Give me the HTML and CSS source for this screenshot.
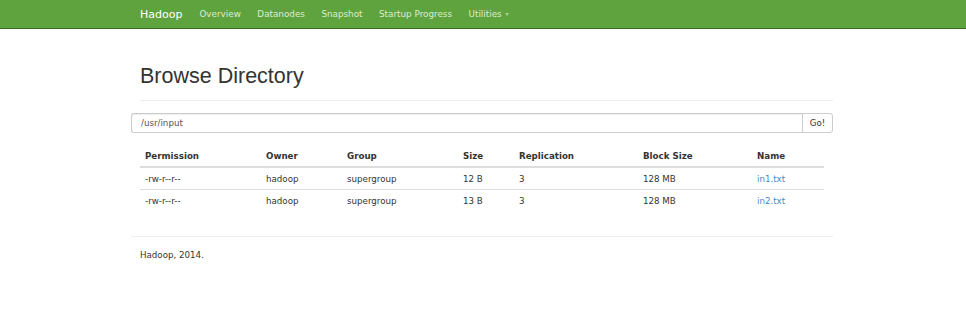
FILE: index.html
```html
<!DOCTYPE html>
<html lang="en">
<head>
    <meta charset="UTF-8">
    <title>Browsing HDFS</title>
    <link rel="stylesheet" href="styles.css">
</head>
<body>

    <!-- Top navigation -->
    <header class="navbar">
        <div class="nav-inner">
            <a class="brand" href="#">Hadoop</a>
            <ul class="nav">
                <li><a href="#">Overview</a></li>
                <li><a href="#">Datanodes</a></li>
                <li><a href="#">Snapshot</a></li>
                <li><a href="#">Startup Progress</a></li>
                <li><a href="#">Utilities <span class="caret"></span></a></li>
            </ul>
        </div>
    </header>

    <div class="container">
        <div class="page-header">
            <h1>Browse Directory</h1>
        </div>

        <form class="input-group" onsubmit="return false;">
            <input type="text" class="path-input" value="/usr/input">
            <button type="submit" class="go-btn">Go!</button>
        </form>

        <table class="listing">
            <thead>
                <tr>
                    <th class="c-perm">Permission</th>
                    <th class="c-owner">Owner</th>
                    <th class="c-group">Group</th>
                    <th class="c-size">Size</th>
                    <th class="c-repl">Replication</th>
                    <th class="c-block">Block Size</th>
                    <th>Name</th>
                </tr>
            </thead>
            <tbody>
                <tr>
                    <td>-rw-r--r--</td>
                    <td>hadoop</td>
                    <td>supergroup</td>
                    <td>12 B</td>
                    <td>3</td>
                    <td>128 MB</td>
                    <td><a href="#">in1.txt</a></td>
                </tr>
                <tr>
                    <td>-rw-r--r--</td>
                    <td>hadoop</td>
                    <td>supergroup</td>
                    <td>13 B</td>
                    <td>3</td>
                    <td>128 MB</td>
                    <td><a href="#">in2.txt</a></td>
                </tr>
            </tbody>
        </table>

        <hr class="footer-rule">
        <p class="footer">Hadoop, 2014.</p>
    </div>

</body>
</html>
```

FILE: styles.css
```css
body {
    margin: 0;
    font-family: "DejaVu Sans", sans-serif;
    font-size: 8.7px;
    color: #333;
    background: #fff;
}

a {
    text-decoration: none;
}

/* Navbar */
.navbar {
    background: #5fa33e;
    border-bottom: 1px solid #3a6a2a;
    height: 28px;
}

.nav-inner {
    width: 702px;
    margin-left: calc(50% - 352px);
    display: flex;
    align-items: center;
    height: 28px;
    padding-left: 9px;
    box-sizing: border-box;
}

.brand {
    color: #fff;
    font-size: 11px;
    margin-right: 17px;
}

.nav {
    list-style: none;
    margin: 0;
    padding: 0;
    display: flex;
}

.nav li {
    margin-right: 16.5px;
}

.nav a {
    color: #dcecd2;
    font-size: 8.8px;
}

.caret {
    display: inline-block;
    width: 0;
    height: 0;
    margin-left: 1px;
    vertical-align: middle;
    border-top: 3px solid #a9d094;
    border-left: 2px solid transparent;
    border-right: 2px solid transparent;
}

/* Content */
.container {
    width: 702px;
    margin-left: calc(50% - 352px);
}

.page-header {
    margin: 0 0 12px 9px;
    padding: 34px 0 11px;
    border-bottom: 1px solid #eee;
}

.page-header h1 {
    margin: 0;
    font-family: "Liberation Sans", Arial, sans-serif;
    font-weight: normal;
    font-size: 21.5px;
    line-height: 26px;
    color: #333;
}

.input-group {
    display: flex;
    height: 20px;
    margin-bottom: 10px;
}

.path-input {
    flex: 1;
    border: 1px solid #ccc;
    border-right: none;
    border-radius: 3px 0 0 3px;
    padding: 0 9px;
    font-family: "DejaVu Sans", sans-serif;
    font-size: 8.7px;
    color: #555;
    box-shadow: inset 0 1px 1px rgba(0, 0, 0, 0.075);
}

.go-btn {
    width: 31px;
    border: 1px solid #ccc;
    border-radius: 0 3px 3px 0;
    background: #fff;
    font-family: "DejaVu Sans", sans-serif;
    font-size: 8.7px;
    color: #333;
    padding: 0;
}

.listing {
    width: 684px;
    margin-left: 9px;
    border-collapse: collapse;
}

.listing th,
.listing td {
    text-align: left;
    padding: 6px 5px 5px;
    height: 10px;
    line-height: 10px;
}

.listing th {
    font-weight: bold;
    border-bottom: 2px solid #ddd;
    padding-top: 8px;
    padding-bottom: 5px;
}

.listing td {
    border-top: 1px solid #ddd;
}

.listing tbody tr:first-child td {
    border-top: none;
}

.listing td a {
    color: #428bca;
}

.c-perm { width: 111px; }
.c-owner { width: 71px; }
.c-group { width: 106px; }
.c-size { width: 46px; }
.c-repl { width: 114px; }
.c-block { width: 104px; }

.footer-rule {
    border: none;
    border-top: 1px solid #eee;
    margin: 25px 0 0;
}

.footer {
    margin: 13px 0 0 9px;
}
```
